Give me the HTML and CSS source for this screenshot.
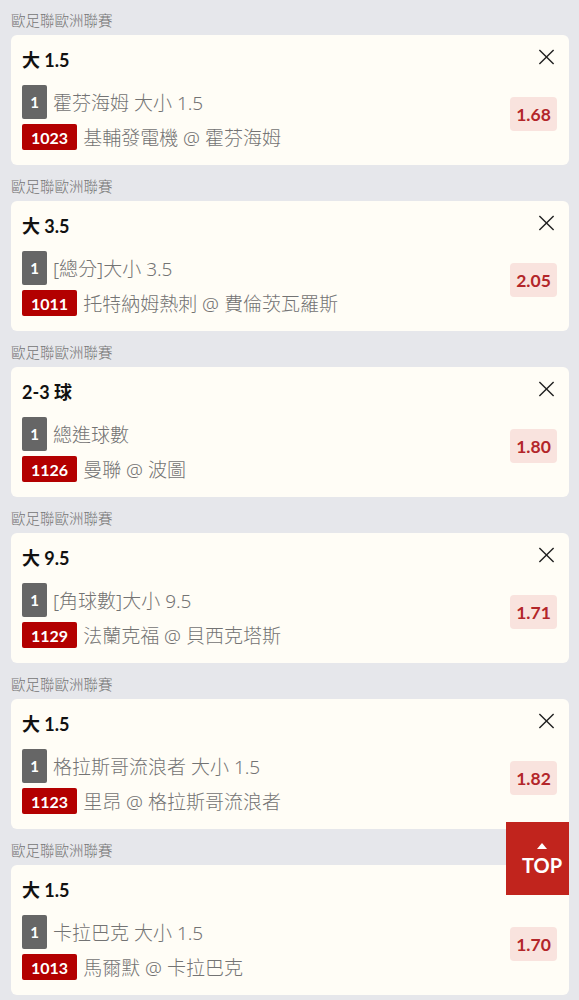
FILE: index.html
```html
<!DOCTYPE html>
<html lang="zh-Hant">
<head>
<meta charset="utf-8">
<link rel="stylesheet" href="styles.css">
</head>
<body>
<div class="list">
  <section class="group">
    <div class="league">歐足聯歐洲聯賽</div>
    <div class="card">
      <div class="info">
        <div class="title">大 1.5</div>
        <div class="row"><span class="num">1</span><span class="txt">霍芬海姆 大小 1.5</span></div>
        <div class="row row2"><span class="code">1023</span><span class="txt">基輔發電機 @ 霍芬海姆</span></div>
      </div>
      <div class="side">
        <svg class="close" viewBox="0 0 18 18" width="18" height="18"><path d="M1 1L17 17M17 1L1 17" stroke="#222" stroke-width="1.6" fill="none"/></svg>
        <div class="odds">1.68</div>
      </div>
    </div>
  </section>
  <section class="group">
    <div class="league">歐足聯歐洲聯賽</div>
    <div class="card">
      <div class="info">
        <div class="title">大 3.5</div>
        <div class="row"><span class="num">1</span><span class="txt">[總分]大小 3.5</span></div>
        <div class="row row2"><span class="code">1011</span><span class="txt">托特納姆熱刺 @ 費倫茨瓦羅斯</span></div>
      </div>
      <div class="side">
        <svg class="close" viewBox="0 0 18 18" width="18" height="18"><path d="M1 1L17 17M17 1L1 17" stroke="#222" stroke-width="1.6" fill="none"/></svg>
        <div class="odds">2.05</div>
      </div>
    </div>
  </section>
  <section class="group">
    <div class="league">歐足聯歐洲聯賽</div>
    <div class="card">
      <div class="info">
        <div class="title">2-3 球</div>
        <div class="row"><span class="num">1</span><span class="txt">總進球數</span></div>
        <div class="row row2"><span class="code">1126</span><span class="txt">曼聯 @ 波圖</span></div>
      </div>
      <div class="side">
        <svg class="close" viewBox="0 0 18 18" width="18" height="18"><path d="M1 1L17 17M17 1L1 17" stroke="#222" stroke-width="1.6" fill="none"/></svg>
        <div class="odds">1.80</div>
      </div>
    </div>
  </section>
  <section class="group">
    <div class="league">歐足聯歐洲聯賽</div>
    <div class="card">
      <div class="info">
        <div class="title">大 9.5</div>
        <div class="row"><span class="num">1</span><span class="txt">[角球數]大小 9.5</span></div>
        <div class="row row2"><span class="code">1129</span><span class="txt">法蘭克福 @ 貝西克塔斯</span></div>
      </div>
      <div class="side">
        <svg class="close" viewBox="0 0 18 18" width="18" height="18"><path d="M1 1L17 17M17 1L1 17" stroke="#222" stroke-width="1.6" fill="none"/></svg>
        <div class="odds">1.71</div>
      </div>
    </div>
  </section>
  <section class="group">
    <div class="league">歐足聯歐洲聯賽</div>
    <div class="card">
      <div class="info">
        <div class="title">大 1.5</div>
        <div class="row"><span class="num">1</span><span class="txt">格拉斯哥流浪者 大小 1.5</span></div>
        <div class="row row2"><span class="code">1123</span><span class="txt">里昂 @ 格拉斯哥流浪者</span></div>
      </div>
      <div class="side">
        <svg class="close" viewBox="0 0 18 18" width="18" height="18"><path d="M1 1L17 17M17 1L1 17" stroke="#222" stroke-width="1.6" fill="none"/></svg>
        <div class="odds">1.82</div>
      </div>
    </div>
  </section>
  <section class="group">
    <div class="league">歐足聯歐洲聯賽</div>
    <div class="card">
      <div class="info">
        <div class="title">大 1.5</div>
        <div class="row"><span class="num">1</span><span class="txt">卡拉巴克 大小 1.5</span></div>
        <div class="row row2"><span class="code">1013</span><span class="txt">馬爾默 @ 卡拉巴克</span></div>
      </div>
      <div class="side">
        <svg class="close" viewBox="0 0 18 18" width="18" height="18"><path d="M1 1L17 17M17 1L1 17" stroke="#222" stroke-width="1.6" fill="none"/></svg>
        <div class="odds">1.70</div>
      </div>
    </div>
  </section>
</div>
<div class="top-btn">
  <span class="tri"></span>
  <span class="top-txt">TOP</span>
</div>
</body>
</html>
```

FILE: styles.css
```css
html, body {
  margin: 0;
  padding: 0;
  background: #e6e7eb;
  font-family: Lato, "Noto Sans CJK TC", sans-serif;
  overflow: hidden;
}
.list {
  display: flex;
  flex-direction: column;
  gap: 7px;
  padding: 6px 10px 0 11px;
}
.group {
  display: flex;
  flex-direction: column;
}
.league {
  height: 29px;
  line-height: 28px;
  font-size: 14.5px;
  color: #757575;
  font-family: "Noto Sans CJK TC", sans-serif;
  font-weight: 300;
}
.card {
  background: #fffdf6;
  border-radius: 6px;
  height: 130px;
  box-sizing: border-box;
  padding: 13px 12px 15px 11px;
  display: flex;
}
.info {
  flex: 1;
  display: flex;
  flex-direction: column;
}
.title {
  font-size: 18px;
  font-weight: 700;
  line-height: 24px;
  color: #111;
  font-family: Lato, "Noto Sans CJK TC", sans-serif;
}
.row {
  display: flex;
  align-items: center;
  gap: 6px;
  margin-top: 13px;
  height: 34px;
}
.row2 {
  margin-top: 5px;
  height: 26px;
}
.num {
  width: 25px;
  height: 34px;
  background: #666;
  color: #fff;
  border-radius: 2px;
  font-weight: 700;
  font-size: 15px;
  display: flex;
  align-items: center;
  justify-content: center;
}
.code {
  height: 26px;
  padding: 0 9px;
  background: #b30000;
  color: #fff;
  border-radius: 2px;
  font-weight: 700;
  font-size: 16px;
  display: flex;
  align-items: center;
  justify-content: center;
}
.txt {
  font-family: "Noto Sans", "Noto Sans CJK TC", sans-serif;
  font-weight: 300;
  font-size: 19px;
  color: #737373;
  white-space: nowrap;
}
.side {
  display: flex;
  flex-direction: column;
  align-items: flex-end;
  padding-top: 1px;
}
.close {
  width: 17px;
  height: 16px;
  margin-right: 2px;
}
.odds {
  margin-top: 32px;
  width: 47px;
  height: 34px;
  background: #f9e3de;
  border-radius: 4px;
  color: #b3262a;
  font-weight: 700;
  font-size: 17.5px;
  display: flex;
  align-items: center;
  justify-content: center;
}
.top-btn {
  position: fixed;
  right: 10px;
  top: 822px;
  width: 63px;
  height: 73px;
  box-sizing: border-box;
  padding-left: 9px;
  background: #c1241d;
  display: flex;
  flex-direction: column;
  align-items: center;
  justify-content: center;
  gap: 6px;
}
.tri {
  width: 0;
  height: 0;
  border-left: 5px solid transparent;
  border-right: 5px solid transparent;
  border-bottom: 6px solid #fff;
}
.top-txt {
  color: #fff;
  font-weight: 700;
  font-size: 20px;
  line-height: 20px;
}
```
